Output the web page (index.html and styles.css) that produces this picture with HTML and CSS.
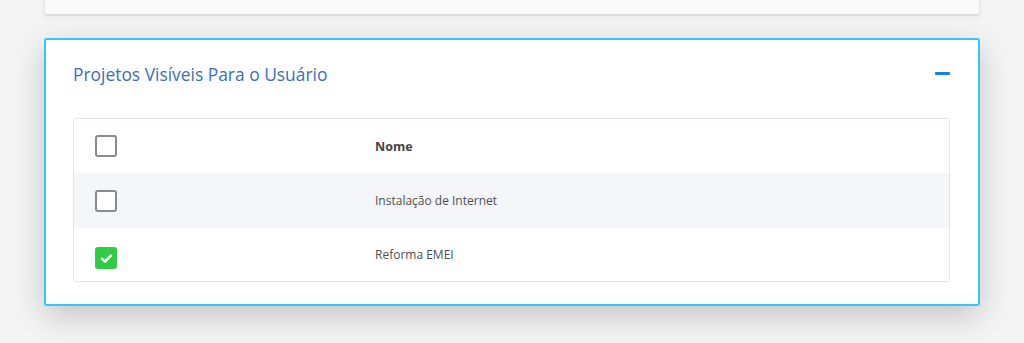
FILE: index.html
```html
<!DOCTYPE html>
<html>
<head>
  <meta charset="utf-8">
  <title>Projetos</title>
  <link rel="stylesheet" href="styles.css">
</head>
<body>
  <div class="panel panel-prev"></div>

  <div class="panel panel-active">
    <div class="panel-head">
      <h3>Projetos Visíveis Para o Usuário</h3>
      <span class="collapse"></span>
    </div>

    <div class="table">
      <div class="row head">
        <div class="cell-check"><span class="check"></span></div>
        <div class="cell-name">Nome</div>
      </div>
      <div class="row striped">
        <div class="cell-check"><span class="check"></span></div>
        <div class="cell-name">Instalação de Internet</div>
      </div>
      <div class="row">
        <div class="cell-check">
          <span class="check checked">
            <svg viewBox="0 0 12 12" width="13" height="13"><path d="M2 6.3 L4.7 8.9 L10 3.3" fill="none" stroke="#fff" stroke-width="2.4" stroke-linecap="round" stroke-linejoin="round"/></svg>
          </span>
        </div>
        <div class="cell-name">Reforma EMEI</div>
      </div>
    </div>
  </div>
</body>
</html>
```

FILE: styles.css
```css
body {
  margin: 0;
  padding: 0;
  background-color: #f4f4f4;
  font-family: "Open Sans", "Noto Sans", sans-serif;
  height: 343px;
  overflow: hidden;
}

.panel {
  margin-left: 44px;
  width: 936px;
  box-sizing: border-box;
  border-radius: 3px;
}

.panel-prev {
  height: 40px;
  margin-top: -24px;
  background-color: #fafafa;
  border: 1px solid #e2e2e2;
  border-bottom: 2px solid #dcdcdc;
  box-shadow: 0 2px 6px rgba(0,0,0,0.04);
}

.panel-active {
  margin-top: 22px;
  background-color: #fff;
  border: 2px solid #38c6f8;
  box-shadow: 0 10px 32px rgba(0,0,0,0.2);
  padding: 22px 28px 22px 27px;
}

.panel-head {
  display: flex;
  justify-content: space-between;
  align-items: center;
  height: 24px;
  margin-bottom: 32px;
}

h3 {
  margin: 0;
  font-size: 17.4px;
  font-weight: 400;
  line-height: 24px;
  color: #3a70b6;
}

.collapse {
  width: 15px;
  height: 3px;
  background-color: #1180f0;
  border-radius: 1px;
  margin-top: -2px;
}

.table {
  border: 1px solid #e0e4ea;
  border-radius: 3px;
}

.row {
  display: grid;
  grid-template-columns: 301px 1fr;
  align-items: center;
  height: 54px;
}

.row.striped {
  background-color: #f4f6fa;
  height: 55px;
}

.row:last-child {
  height: 53px;
}

.cell-check {
  padding-left: 21px;
  display: flex;
  align-items: center;
}

.check {
  width: 22px;
  height: 22px;
  box-sizing: border-box;
  border: 2px solid #8a8a8a;
  border-radius: 3px;
  background-color: #fff;
  display: flex;
  align-items: center;
  justify-content: center;
}

.check.checked {
  border: none;
  background-color: #2fcc45;
  margin-top: 7px;
}

.cell-name {
  font-size: 12px;
  color: #505050;
}

.head .cell-name {
  font-weight: 700;
  font-size: 12.5px;
  color: #444;
}
```
